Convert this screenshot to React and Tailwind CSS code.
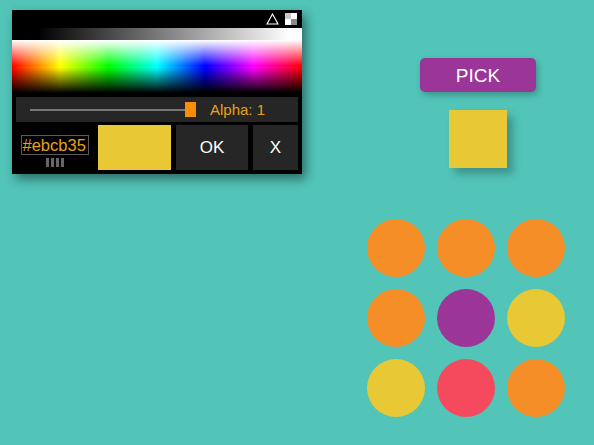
import React from "react";

const colors = [
  "#f68e27", "#f68e27", "#f68e27",
  "#f68e27", "#9b3598", "#e8c835",
  "#e8c835", "#f54a5e", "#f68e27",
];

export default function App() {
  return (
    <div
      className="relative w-[594px] h-[445px] overflow-hidden bg-[#52c4b8]"
      style={{ fontFamily: '"Liberation Sans", Arial, sans-serif' }}
    >
      {/* right content */}
      <div className="flex flex-col pl-[367px] pt-[58px]">
        <button className="ml-[53px] w-[116px] h-[34px] rounded-[5px] bg-[#9b3598] text-white text-[19px] leading-none shadow-[2px_3px_6px_rgba(0,0,0,0.25)]">
          PICK
        </button>
        <div className="ml-[82px] mt-[18px] w-[58px] h-[58px] bg-[#e8c835] shadow-[6px_6px_8px_rgba(0,0,0,0.25)]" />
        <div className="mt-[51px] grid grid-cols-[repeat(3,58px)] gap-[12px]">
          {colors.map((c, i) => (
            <div key={i} className="w-[58px] h-[58px] rounded-full" style={{ backgroundColor: c }} />
          ))}
        </div>
      </div>

      {/* color picker popover */}
      <div className="absolute left-[12px] top-[10px] w-[290px] h-[164px] bg-black flex flex-col shadow-[4px_5px_10px_rgba(0,0,0,0.45)]">
        <div className="h-[18px] flex items-center justify-end gap-[6px] pr-[5px]">
          <svg width="13" height="12" viewBox="0 0 13 12">
            <path d="M6.5 1 L12 11 L1 11 Z" fill="none" stroke="#fff" strokeWidth="1.1" />
          </svg>
          <div className="w-[12px] h-[12px] grid grid-cols-2 grid-rows-2">
            <div className="bg-[#c8c8c8]" />
            <div className="bg-white" />
            <div className="bg-white" />
            <div className="bg-[#8a8a8a]" />
          </div>
        </div>
        <div className="h-[12px] bg-[linear-gradient(to_right,#000_9%,#fff_96%)]" />
        <div className="h-[53px] bg-[image:linear-gradient(to_bottom,#fff_0%,rgba(255,255,255,0)_48%,rgba(0,0,0,0)_52%,#000_100%),linear-gradient(to_right,#f00_0%,#ff0_16.6%,#0f0_33.3%,#0ff_50%,#00f_66.6%,#f0f_83.3%,#f00_100%)]" />
        <div className="mx-[4px] mt-[4px] h-[25px] bg-[#262626] flex items-center">
          <div className="ml-[14px] w-[155px] h-[2px] bg-[#777]" />
          <div className="w-[11px] h-[15px] bg-[#f68e0a]" />
          <span className="ml-[14px] text-[15px] text-[#e8a21a] leading-none">Alpha: 1</span>
        </div>
        <div className="mx-[4px] mt-[3px] h-[45px] flex gap-[5px]">
          <div className="w-[77px] flex flex-col items-center pt-[10px]">
            <div className="w-[68px] h-[20px] border border-[#5a5a5a] text-[#e8a21a] text-[16.5px] leading-[18px] pl-[1px] whitespace-nowrap overflow-hidden">
              #ebcb35
            </div>
            <div className="mt-[3px] flex gap-[2px]">
              <div className="w-[3px] h-[9px] bg-[#666]" />
              <div className="w-[3px] h-[9px] bg-[#666]" />
              <div className="w-[3px] h-[9px] bg-[#666]" />
              <div className="w-[3px] h-[9px] bg-[#666]" />
            </div>
          </div>
          <div className="w-[73px] h-full bg-[#e8c835]" />
          <div className="w-[72px] h-full bg-[#262626] flex items-center justify-center text-white text-[17px]">
            OK
          </div>
          <div className="w-[45px] h-full bg-[#262626] flex items-center justify-center text-white text-[17px]">
            X
          </div>
        </div>
      </div>
    </div>
  );
}
